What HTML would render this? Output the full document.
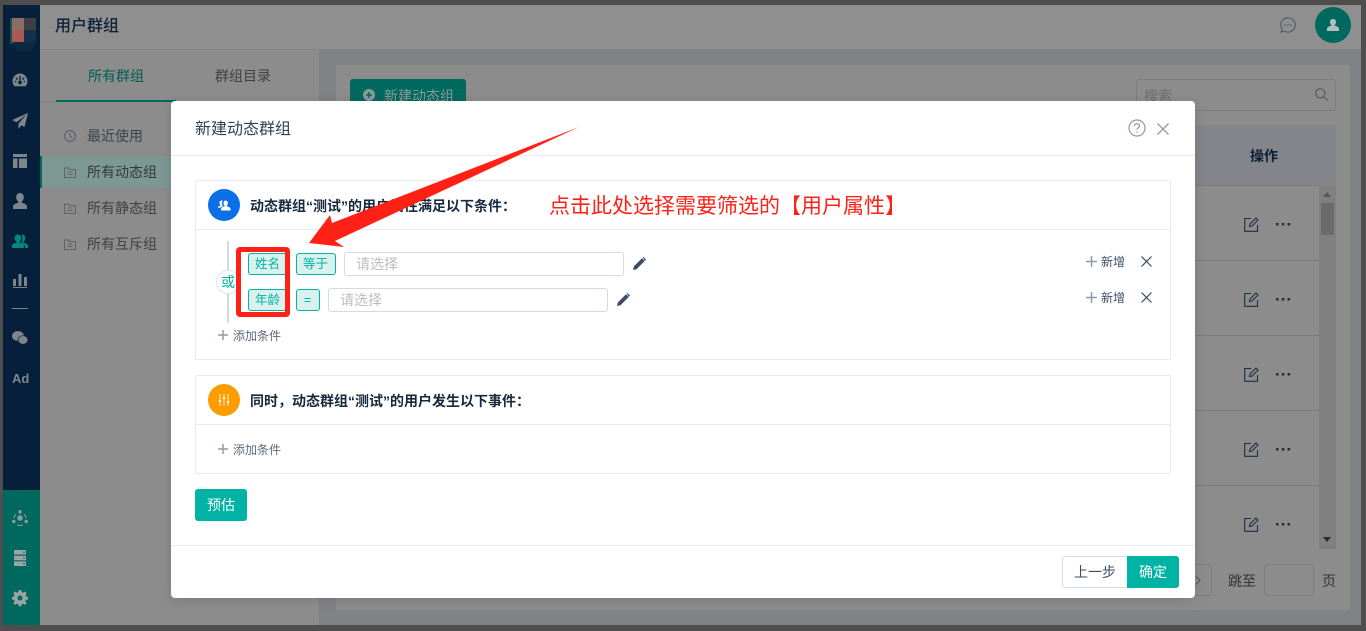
<!DOCTYPE html>
<html lang="zh"><head><meta charset="utf-8"><title>用户群组</title>
<style>
*{box-sizing:border-box}
html,body{margin:0;padding:0;width:1366px;height:631px;overflow:hidden;background:#4e4e4e;font-family:"Liberation Sans","Noto Sans CJK SC",sans-serif}
.a{position:absolute}
.t{position:absolute;white-space:nowrap;line-height:20px}
.tag{position:absolute;height:22px;border:1px solid #00b3a4;border-radius:3px;background:#d9f2ee;color:#00b3a4;font-size:12.5px;line-height:21px;text-align:center;text-indent:-1px}
.inp{position:absolute;height:24px;width:280px;border:1px solid #d3dae3;border-radius:3px;background:#fff;color:#bdbdbd;font-size:14px;line-height:23px;padding-left:11px}
.sec{position:absolute;left:195px;width:976px;border:1px solid #e8eaed;border-radius:2px;background:#fff}
.hl{position:absolute;height:1px}
svg{position:absolute;overflow:visible}
</style></head><body>
<!-- frame -->
<div class="a" style="left:3px;top:5px;width:1358px;height:620px;background:#8c8c8c"></div>
<!-- sidebar -->
<div class="a" style="left:3px;top:5px;width:37px;height:485px;background:#06203c"></div>
<div class="a" style="left:3px;top:490px;width:37px;height:135px;background:#00695f"></div>
<div class="a" style="left:10px;top:18px;width:3px;height:26px;background:#14544f"></div>
<div class="a" style="left:12px;top:18px;width:12px;height:12px;background:#8a6e66"></div>
<div class="a" style="left:24px;top:18px;width:12px;height:12px;background:#3d3f44"></div>
<div class="a" style="left:12px;top:30px;width:12px;height:12px;background:#ad5856"></div>
<div class="a" style="left:24px;top:30px;width:12px;height:12px;background:#13314a"></div>
<div class="a" style="left:13px;top:42px;width:22px;height:10px;background:#0a2a40;border-radius:0 0 11px 11px"></div>
<svg style="left:12px;top:73px" width="16" height="16" viewBox="0 0 16 16"><path d="M8 .5A7.5 7.5 0 0 0 .5 8c0 2 .8 3.900 2 5.200h11c1.200-1.300 2-3.200 2-5.200A7.500 7.500 0 0 0 8 .500z" fill="#7e858c"/><path d="M8 3v5M4 5l1.500 1.500M12 5l-1.500 1.500M2.800 8.500h1.500M11.700 8.500h1.500" stroke="#06203c" stroke-width="1.300"/><circle cx="8" cy="9.500" r="1.800" fill="#06203c"/></svg>
<svg style="left:12px;top:113px" width="16" height="16" viewBox="0 0 16 16"><path d="M16 0L0 7l4.500 2.300L14 2 6.500 10.500V16l2.800-3.600 3.200 1.600z" fill="#7e858c"/></svg>
<svg style="left:13px;top:154px" width="14" height="14" viewBox="0 0 14 14"><path d="M0 0h14v3H0zM0 4.500h4.500V14H0zM6 4.500h8V14H6z" fill="#7e858c"/></svg>
<svg style="left:12px;top:193px" width="16" height="16" viewBox="0 0 16 16"><path d="M8 0c2.400 0 3.800 1.800 3.800 4.200 0 2-1 3.500-2 4.300v1.200c2.500.7 5.200 1.600 5.200 3.800V16H1v-2.500c0-2.200 2.700-3.100 5.200-3.800V8.500c-1-.8-2-2.300-2-4.300C4.200 1.800 5.600 0 8 0z" fill="#7e858c"/></svg>
<svg style="left:12px;top:233px" width="16" height="16" viewBox="0 0 16 16"><path d="M6 1.500c2 0 3.300 1.500 3.300 3.500 0 1.700-.8 3-1.700 3.700v1c2.200.6 4.400 1.400 4.400 3.300V15H0v-2c0-1.900 2.200-2.700 4.400-3.300v-1C3.500 8 2.700 6.700 2.700 5c0-2 1.300-3.500 3.300-3.500z" fill="#00897b"/><path d="M10 1.500c2 0 3.200 1.500 3.200 3.500 0 1.700-.8 3-1.700 3.700v1c2.200.6 4.500 1.400 4.500 3.300v2h-2.800c0-3-2.500-4.200-4.300-4.700.9-1 1.500-2.800 1.500-4.800 0-1.300-.5-2.300-1-3 .2 0 .4 0 .6 0z" fill="#00897b"/></svg>
<svg style="left:13px;top:274px" width="14" height="14" viewBox="0 0 14 14"><path d="M0 5h3v7H0zM5.500 0h3v12h-3zM11 3h3v9h-3zM0 13h14v1H0z" fill="#7e858c"/></svg>
<div class="a" style="left:12px;top:308px;width:16px;height:1px;background:#7e858c"></div>
<svg style="left:12px;top:331px" width="16" height="14" viewBox="0 0 16 14"><ellipse cx="6" cy="5" rx="6" ry="5" fill="#7e858c"/><ellipse cx="11" cy="9" rx="5" ry="4.300" fill="#7e858c" stroke="#06203c" stroke-width=".7"/></svg>
<div class="t" style="left:12px;top:369px;font-size:13px;font-weight:bold;color:#7e858c">Ad</div>
<svg style="left:12px;top:510px" width="16" height="16" viewBox="0 0 16 16"><circle cx="8" cy="8" r="2.800" fill="#8c9c99"/><circle cx="8" cy="1.800" r="1.800" fill="#8c9c99"/><circle cx="1.800" cy="11.500" r="1.800" fill="#8c9c99"/><circle cx="14.200" cy="11.500" r="1.800" fill="#8c9c99"/><path d="M4 4.200A6 6 0 0 0 2 8M12 4.200A6 6 0 0 1 14 8M5 14.800a7 7 0 0 0 6 0" stroke="#8c9c99" fill="none"/></svg>
<svg style="left:13px;top:550px" width="14" height="16" viewBox="0 0 14 16"><path d="M1 0h12v4.500H1zM1 5.700h12v4.500H1zM1 11.400h12V16H1z" fill="#9aa5a3"/><circle cx="11" cy="2.200" r=".8" fill="#00695f"/><circle cx="11" cy="8" r=".8" fill="#00695f"/><circle cx="11" cy="13.700" r=".8" fill="#00695f"/></svg>
<svg style="left:12px;top:590px" width="16" height="16" viewBox="0 0 16 16"><path d="M6.700 0h2.600l.4 2.200 1.300.6L12.900 1.500l1.800 1.800-1.300 1.900.6 1.300 2 .4v2.600l-2 .4-.6 1.300 1.300 1.900-1.800 1.800-1.900-1.300-1.300.6-.4 2.100H6.700l-.4-2.100-1.300-.6-1.900 1.300-1.800-1.800 1.300-1.900-.6-1.300-2-.4V6.900l2-.4.6-1.300-1.300-1.900 1.800-1.800L5 2.800l1.300-.6z" fill="#9aa5a3"/><circle cx="8" cy="8" r="2.500" fill="#00695f"/></svg>
<!-- header -->
<div class="a" style="left:40px;top:5px;width:1321px;height:45px;background:#8f8f8f;border-bottom:1px solid #858585"></div>
<div class="t" style="left:55px;top:17px;font-size:16px;font-weight:500;color:#0c2036">用户群组</div>
<svg style="left:1280px;top:17px" width="16" height="16" viewBox="0 0 16 16"><path d="M8 .8A7.200 7.200 0 1 1 4.300 14.200L1.200 15l.8-3A7.200 7.200 0 0 1 8 .8z" fill="none" stroke="#4e5865" stroke-width="1.100"/><circle cx="5" cy="8" r=".8" fill="#4e5865"/><circle cx="8" cy="8" r=".8" fill="#4e5865"/><circle cx="11" cy="8" r=".8" fill="#4e5865"/></svg>
<div class="a" style="left:1315px;top:7px;width:36px;height:36px;border-radius:50%;background:#00695f"></div>
<svg style="left:1327px;top:19px" width="12" height="12" viewBox="0 0 12 12"><path d="M6 0c1.900 0 3 1.300 3 3 0 1.400-.7 2.400-1.300 3v.8C9.500 7.200 12 8 12 10v2H0v-2c0-2 2.500-2.800 4.300-3.200V6C3.700 5.400 3 4.400 3 3c0-1.700 1.100-3 3-3z" fill="#b3bfbc"/></svg>
<!-- left panel -->
<div class="a" style="left:319px;top:50px;width:1px;height:575px;background:#7f8186"></div>
<div class="a" style="left:40px;top:101px;width:279px;height:1px;background:#7f8186"></div>
<div class="a" style="left:56px;top:100px;width:120px;height:2px;background:#00695f"></div>
<div class="t" style="left:88px;top:66px;font-size:14px;color:#005e55">所有群组</div>
<div class="t" style="left:215px;top:66px;font-size:14px;color:#3d4247">群组目录</div>
<div class="a" style="left:40px;top:156px;width:279px;height:32px;background:#7d9792"></div>
<div class="a" style="left:40px;top:156px;width:2px;height:32px;background:#00695f"></div>
<svg style="left:64px;top:130px" width="12" height="12" viewBox="0 0 12 12"><circle cx="6" cy="6" r="5.400" fill="none" stroke="#55595f"/><path d="M6 3v3.300l2.200 1.300" fill="none" stroke="#55595f"/></svg>
<svg style="left:64px;top:167px" width="12" height="11" viewBox="0 0 12 11"><path d="M.5 1h4l1 1.500h6v8H.5zM3.500 5h5M3.500 7.500h5" fill="none" stroke="#5c6468"/></svg>
<svg style="left:64px;top:203px" width="12" height="11" viewBox="0 0 12 11"><path d="M.5 1h4l1 1.500h6v8H.5zM3.500 5h5M3.500 7.500h5" fill="none" stroke="#5c6468"/></svg>
<svg style="left:64px;top:239px" width="12" height="11" viewBox="0 0 12 11"><path d="M.5 1h4l1 1.500h6v8H.5zM3.500 5h5M3.500 7.500h5" fill="none" stroke="#5c6468"/></svg>
<div class="t" style="left:87px;top:126px;font-size:14px;color:#3d4247">最近使用</div>
<div class="t" style="left:87px;top:162px;font-size:14px;color:#343a3c">所有动态组</div>
<div class="t" style="left:87px;top:198px;font-size:14px;color:#3d4247">所有静态组</div>
<div class="t" style="left:87px;top:234px;font-size:14px;color:#3d4247">所有互斥组</div>
<!-- right content -->
<div class="a" style="left:320px;top:50px;width:1041px;height:575px;background:#808286"></div>
<div class="a" style="left:336px;top:65px;width:1014px;height:545px;background:#8c8c8c"></div>
<div class="a" style="left:350px;top:79px;width:116px;height:32px;background:#00695f;border-radius:3px"></div>
<div class="a" style="left:363px;top:89px;width:12px;height:12px;border-radius:50%;background:#8b9a98"></div>
<svg style="left:365px;top:91px" width="8" height="8"><path d="M4 1v6M1 4h6" stroke="#00695f" stroke-width="1.500"/></svg>
<div class="t" style="left:384px;top:86px;font-size:14px;color:#8b9a98">新建动态组</div>
<div class="a" style="left:1136px;top:79px;width:200px;height:32px;border:1px solid #7b7d85;border-radius:3px"></div>
<div class="t" style="left:1144px;top:86px;font-size:14px;color:#6e6e6e">搜索</div>
<svg style="left:1315px;top:88px" width="13" height="13" viewBox="0 0 13 13"><circle cx="5.300" cy="5.300" r="4.600" fill="none" stroke="#4e5865" stroke-width="1.100"/><path d="M8.700 8.700L12.500 12.500" stroke="#4e5865" stroke-width="1.200"/></svg>
<div class="a" style="left:1195px;top:125px;width:141px;height:61px;background:#84858a"></div>
<div class="t" style="left:1250px;top:146px;font-size:14px;font-weight:bold;color:#0c2036">操作</div>
<div class="a" style="left:1195px;top:185px;width:124px;height:1px;background:#7b7b7b"></div>
<div class="a" style="left:1195px;top:260px;width:124px;height:1px;background:#7b7b7b"></div>
<div class="a" style="left:1195px;top:335px;width:124px;height:1px;background:#7b7b7b"></div>
<div class="a" style="left:1195px;top:410px;width:124px;height:1px;background:#7b7b7b"></div>
<div class="a" style="left:1195px;top:485px;width:124px;height:1px;background:#7b7b7b"></div>
<div class="a" style="left:1319px;top:186px;width:17px;height:363px;background:#808080"></div>
<div class="a" style="left:1321px;top:203px;width:13px;height:32px;background:#6b6b6b"></div>
<svg style="left:1323px;top:192px" width="9" height="6"><path d="M0 5h8L4 0z" fill="#585858"/></svg>
<svg style="left:1323px;top:537px" width="9" height="6"><path d="M0 0h8L4 5z" fill="#2c2c2c"/></svg>
<svg style="left:1244px;top:217px" width="15" height="15" viewBox="0 0 15 15"><path d="M7 1.500H.7v12.800h12.800V8M5.500 9.500l.5-2.500 6-6 2 2-6 6z" fill="none" stroke="#1d2f42" stroke-width="1.100"/></svg>
<svg style="left:1244px;top:292px" width="15" height="15" viewBox="0 0 15 15"><path d="M7 1.500H.7v12.800h12.800V8M5.500 9.500l.5-2.500 6-6 2 2-6 6z" fill="none" stroke="#1d2f42" stroke-width="1.100"/></svg>
<svg style="left:1244px;top:367px" width="15" height="15" viewBox="0 0 15 15"><path d="M7 1.500H.7v12.800h12.800V8M5.500 9.500l.5-2.500 6-6 2 2-6 6z" fill="none" stroke="#1d2f42" stroke-width="1.100"/></svg>
<svg style="left:1244px;top:442px" width="15" height="15" viewBox="0 0 15 15"><path d="M7 1.500H.7v12.800h12.800V8M5.500 9.500l.5-2.500 6-6 2 2-6 6z" fill="none" stroke="#1d2f42" stroke-width="1.100"/></svg>
<svg style="left:1244px;top:517px" width="15" height="15" viewBox="0 0 15 15"><path d="M7 1.500H.7v12.800h12.800V8M5.500 9.500l.5-2.500 6-6 2 2-6 6z" fill="none" stroke="#1d2f42" stroke-width="1.100"/></svg>
<svg style="left:1276px;top:223px" width="15" height="3"><path d="M0 0h2.500v2.500H0zM5.800 0h2.500v2.500H5.800zM11.600 0h2.500v2.500h-2.500z" fill="#1d2f42"/></svg>
<svg style="left:1276px;top:298px" width="15" height="3"><path d="M0 0h2.500v2.500H0zM5.800 0h2.500v2.500H5.800zM11.600 0h2.500v2.500h-2.500z" fill="#1d2f42"/></svg>
<svg style="left:1276px;top:373px" width="15" height="3"><path d="M0 0h2.500v2.500H0zM5.800 0h2.500v2.500H5.800zM11.600 0h2.500v2.500h-2.500z" fill="#1d2f42"/></svg>
<svg style="left:1276px;top:448px" width="15" height="3"><path d="M0 0h2.500v2.500H0zM5.800 0h2.500v2.500H5.800zM11.600 0h2.500v2.500h-2.500z" fill="#1d2f42"/></svg>
<svg style="left:1276px;top:523px" width="15" height="3"><path d="M0 0h2.500v2.500H0zM5.800 0h2.500v2.500H5.800zM11.600 0h2.500v2.500h-2.500z" fill="#1d2f42"/></svg>
<div class="a" style="left:1180px;top:564px;width:32px;height:32px;border:1px solid #7b7d85;border-radius:3px"></div>
<svg style="left:1195px;top:576px" width="6" height="9"><path d="M1 .5L5 4.500 1 8.500" fill="none" stroke="#4e5865"/></svg>
<div class="t" style="left:1228px;top:571px;font-size:14px;color:#333">跳至</div>
<div class="a" style="left:1264px;top:564px;width:50px;height:32px;border:1px solid #7b7d85;border-radius:3px"></div>
<div class="t" style="left:1322px;top:571px;font-size:14px;color:#333">页</div>
<!-- modal -->
<div class="a" style="left:171px;top:101px;width:1024px;height:497px;background:#fff;border-radius:4px;box-shadow:0 2px 12px rgba(0,0,0,.12)"></div>
<div class="t" style="left:195px;top:120px;font-size:16px;color:#2f4258">新建动态群组</div>
<svg style="left:1128px;top:119px" width="18" height="18" viewBox="0 0 18 18"><circle cx="9" cy="9" r="8" fill="none" stroke="#8d9bad" stroke-width="1.200"/><path d="M6.500 7c0-1.500 1.100-2.400 2.500-2.400s2.500.9 2.500 2.200c0 1.800-2.500 1.900-2.500 3.800" fill="none" stroke="#8d9bad" stroke-width="1.200"/><circle cx="9" cy="13" r=".8" fill="#8d9bad"/></svg>
<svg style="left:1157px;top:123px" width="12" height="12" viewBox="0 0 12 12"><path d="M.5.500l11 11M11.500.500l-11 11" stroke="#8d9bad" stroke-width="1.300"/></svg>
<div class="hl" style="left:171px;top:155px;width:1024px;background:#e8eaed"></div>
<div class="hl" style="left:171px;top:545px;width:1024px;background:#e8eaed"></div>
<!-- section 1 -->
<div class="sec" style="top:180px;height:180px"></div>
<div class="hl" style="left:195px;top:229px;width:976px;background:#e8eaed"></div>
<div class="a" style="left:208px;top:189px;width:32px;height:32px;border-radius:50%;background:#0b6fe8"></div>
<svg style="left:218px;top:199px" width="13" height="12" viewBox="0 0 13 12"><path d="M7.500 1.500c1.500 0 2.400 1.100 2.400 2.500 0 1.100-.5 2-1.100 2.500v.8c1.500.4 3.700 1 3.700 2.700v1.500H3V10c0-1.700 2.200-2.300 3.600-2.700v-.8C6 6 5.500 5.100 5.500 4c0-1.400.6-2.500 2-2.500z" fill="#fff"/><path d="M3.600 1.500C2.300 1.500 1.500 2.400 1.500 3.700c0 1 .4 1.800 1 2.200v.6C1.300 6.900 0 7.400 0 8.800h2.300c.5-.8 1.500-1.300 2.700-1.700C4.300 6.300 4 5.200 4 4c0-.9.200-1.700.6-2.300-.3-.1-.6-.2-1-.2z" fill="#fff"/></svg>
<div class="t" style="left:250px;top:196px;font-size:14px;font-weight:bold;color:#16293f">动态群组“测试”的用户属性满足以下条件：</div>
<div class="a" style="left:227px;top:241px;width:2px;height:82px;background:#d3dae3"></div>
<div class="a" style="left:216px;top:270px;width:24px;height:24px;border-radius:50%;background:#fff;border:1px solid #e0e4e8"></div>
<div class="t" style="left:221px;top:272px;font-size:14px;color:#00b3a4">或</div>
<div class="tag" style="left:248px;top:253px;width:40px">姓名</div>
<div class="tag" style="left:296px;top:253px;width:40px">等于</div>
<div class="tag" style="left:248px;top:289px;width:40px">年龄</div>
<div class="tag" style="left:296px;top:289px;width:24px">=</div>
<div class="inp" style="left:344px;top:252px">请选择</div>
<div class="inp" style="left:328px;top:288px">请选择</div>
<svg style="left:633px;top:257px" width="13" height="13" viewBox="0 0 13 13"><path d="M0 13l.8-3.500L9 1.300l2.700 2.700-8.200 8.200zM9.800.5l.7-.5 2.500 2.500-.5.800-.7.400z" fill="#3c4d63"/></svg>
<svg style="left:617px;top:293px" width="13" height="13" viewBox="0 0 13 13"><path d="M0 13l.8-3.500L9 1.300l2.700 2.700-8.200 8.200zM9.800.5l.7-.5 2.500 2.500-.5.800-.7.400z" fill="#3c4d63"/></svg>
<svg style="left:1086px;top:256px" width="11" height="11"><path d="M5.500 0v11M0 5.500h11" stroke="#8d9bad" stroke-width="1.500"/></svg>
<div class="t" style="left:1101px;top:252px;font-size:12px;color:#3c4d63">新增</div>
<svg style="left:1141px;top:256px" width="11" height="11"><path d="M.5.500l10 10M10.500.500l-10 10" stroke="#3c4d63" stroke-width="1.200"/></svg>
<svg style="left:1086px;top:292px" width="11" height="11"><path d="M5.500 0v11M0 5.500h11" stroke="#8d9bad" stroke-width="1.500"/></svg>
<div class="t" style="left:1101px;top:288px;font-size:12px;color:#3c4d63">新增</div>
<svg style="left:1141px;top:292px" width="11" height="11"><path d="M.5.500l10 10M10.500.500l-10 10" stroke="#3c4d63" stroke-width="1.200"/></svg>
<svg style="left:218px;top:330px" width="10" height="10"><path d="M5 0v10M0 5h10" stroke="#8d9bad" stroke-width="1.500"/></svg>
<div class="t" style="left:233px;top:326px;font-size:12px;color:#5c6b7e">添加条件</div>
<!-- section 2 -->
<div class="sec" style="top:375px;height:99px"></div>
<div class="hl" style="left:195px;top:424px;width:976px;background:#e8eaed"></div>
<div class="a" style="left:208px;top:384px;width:32px;height:32px;border-radius:50%;background:#ff9d00"></div>
<svg style="left:218px;top:394px" width="12" height="12" viewBox="0 0 12 12"><path d="M2 0v12M6 0v12M10 0v12" stroke="#ffe3b0" stroke-width="1.200"/><path d="M.8 7h2.400M4.800 4h2.400M8.800 8h2.400" stroke="#fff" stroke-width="1.600"/></svg>
<div class="t" style="left:250px;top:391px;font-size:14px;font-weight:bold;color:#16293f">同时，动态群组“测试”的用户发生以下事件：</div>
<svg style="left:218px;top:444px" width="10" height="10"><path d="M5 0v10M0 5h10" stroke="#8d9bad" stroke-width="1.500"/></svg>
<div class="t" style="left:233px;top:440px;font-size:12px;color:#5c6b7e">添加条件</div>
<!-- buttons -->
<div class="a" style="left:195px;top:489px;width:52px;height:32px;background:#00b3a4;border-radius:3px;color:#fff;font-size:14px;line-height:32px;text-align:center">预估</div>
<div class="a" style="left:1062px;top:556px;width:66px;height:32px;background:#fff;border:1px solid #d3dae3;border-radius:3px 0 0 3px;color:#3c4d63;font-size:14px;line-height:30px;text-align:center">上一步</div>
<div class="a" style="left:1127px;top:556px;width:52px;height:32px;background:#00b3a4;border-radius:0 3px 3px 0;color:#fff;font-size:14px;line-height:32px;text-align:center">确定</div>
<!-- annotation -->
<div class="a" style="left:236px;top:247px;width:54px;height:70px;border:5.500px solid #ff2016;border-radius:4px"></div>
<svg style="left:0;top:0" width="1366" height="631"><path d="M579 127L335 241 344 247 309 243 330 215 332 223z" fill="#ff2016"/></svg>
<div class="t" style="left:549px;top:195px;font-size:21px;line-height:24px;color:#ff2016">点击此处选择需要筛选的【用户属性】</div>
</body></html>
